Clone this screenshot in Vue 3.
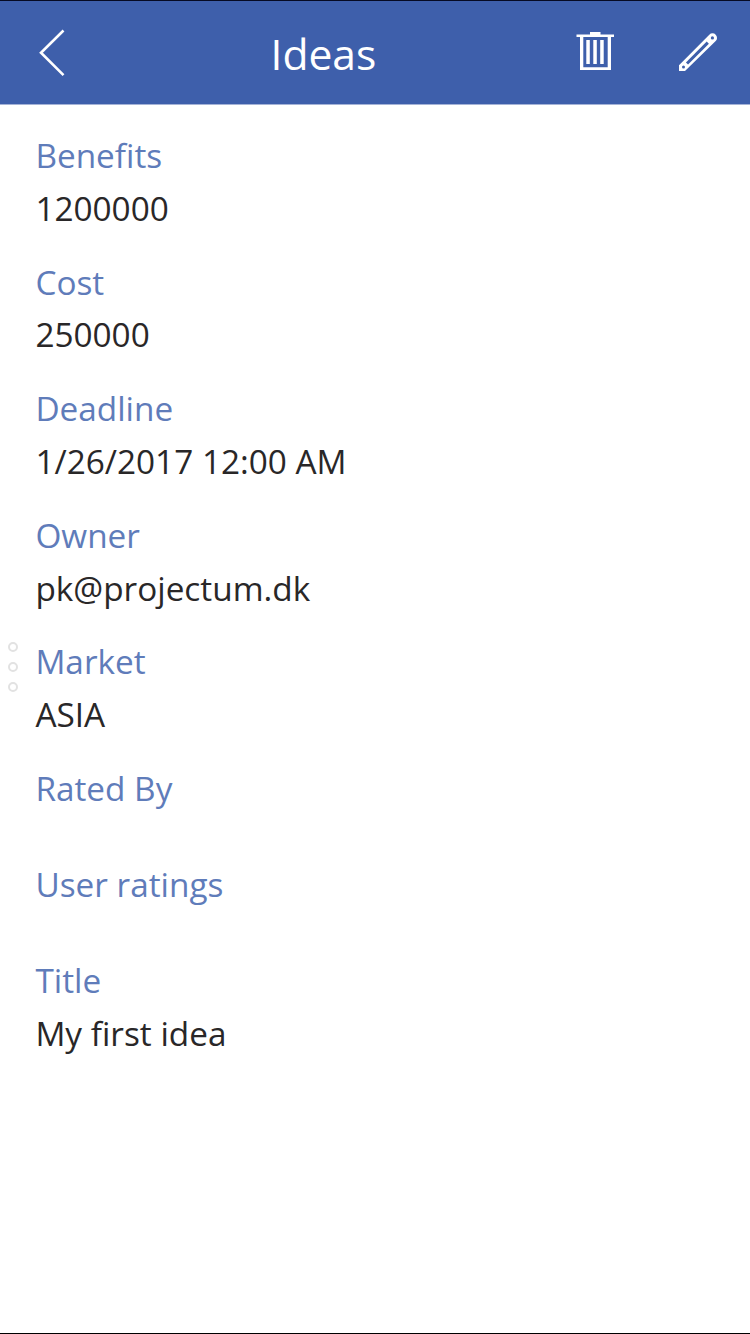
<script setup>
const fields = [
  { label: 'Benefits', value: '1200000' },
  { label: 'Cost', value: '250000' },
  { label: 'Deadline', value: '1/26/2017 12:00 AM' },
  { label: 'Owner', value: 'pk@projectum.dk' },
  { label: 'Market', value: 'ASIA' },
  { label: 'Rated By', value: '' },
  { label: 'User ratings', value: '' },
  { label: 'Title', value: 'My first idea' },
]
</script>

<template>
  <main class="screen">
    <header class="bar">
      <svg class="back" width="40" height="57" viewBox="0 0 40 57"><path d="M30.500 6.500 8 28.700 30.500 51.200" /></svg>
      <h1>Ideas</h1>
      <svg class="trash" width="40" height="43" viewBox="0 0 40 43">
        <path class="solid" d="M1.500 3.500H15V1H25.500V3.500H39V6H36V39H5V6H1.500ZM8.300 6V36.300H32.700V6Z" />
        <path class="solid" d="M11.300 9H14.800V33H11.300ZM18.300 9H21.800V33H18.300ZM25.200 9H28.700V33H25.200Z" />
      </svg>
      <svg class="edit" width="44" height="43" viewBox="0 0 44 43">
        <path class="solid" d="M4 40V34.300L34.300 3.700A4.500 4.500 0 0 1 40.700 10.100L10 40Z" />
        <path class="slot" d="M12 32.500 32.800 11.600" />
        <circle class="hole" cx="37.400" cy="6.900" r="1.600" />
        <circle class="hole" cx="8.500" cy="35.900" r="1.500" />
      </svg>
    </header>
    <dl class="fields">
      <div v-for="field in fields" :key="field.label" class="field">
        <dt>{{ field.label }}</dt>
        <dd v-if="field.value">{{ field.value }}</dd>
      </div>
    </dl>
    <div class="dots"><i></i><i></i><i></i></div>
  </main>
</template>

<style>
body { margin: 0; background: #fff; }
</style>
<style scoped>
.screen { position: relative; box-sizing: border-box; width: 750px; height: 1334px; border-top: 1px solid #060a24; border-bottom: 1px solid #000; background: #fff; font-family: "Open Sans", sans-serif; overflow: hidden; }
.bar { height: 103px; background: #3e5fab; border-bottom: 1px solid #a5b3d7; display: flex; align-items: center; padding-left: 33px; color: #fff; }
svg { fill: none; stroke: #fff; stroke-width: 2.6; flex: none; }
.solid { fill: #fff; fill-rule: evenodd; stroke: none; }
.slot { stroke: #3e5fab; stroke-width: 3; }
.hole { fill: #3e5fab; stroke: none; }
h1 { margin: 0 0 0 197.500px; width: 105.500px; font-size: 42.600px; line-height: 60px; font-weight: 400; white-space: nowrap; }
.trash { margin-left: 199px; }
.edit { margin-left: 60px; }
.fields { margin: 0; padding: 24px 35.400px; }
.field { margin-bottom: 21px; min-height: 75px; }
dt, dd { margin: 0; font-size: 33.330px; line-height: 52.800px; white-space: nowrap; }
dt { color: #5f7cba; }
dd { color: #292728; }
.dots { position: absolute; left: 8px; top: 641px; display: grid; gap: 10px; }
.dots i { box-sizing: border-box; width: 10px; height: 10px; border: 2px solid #e2e2e2; border-radius: 50%; }
</style>
